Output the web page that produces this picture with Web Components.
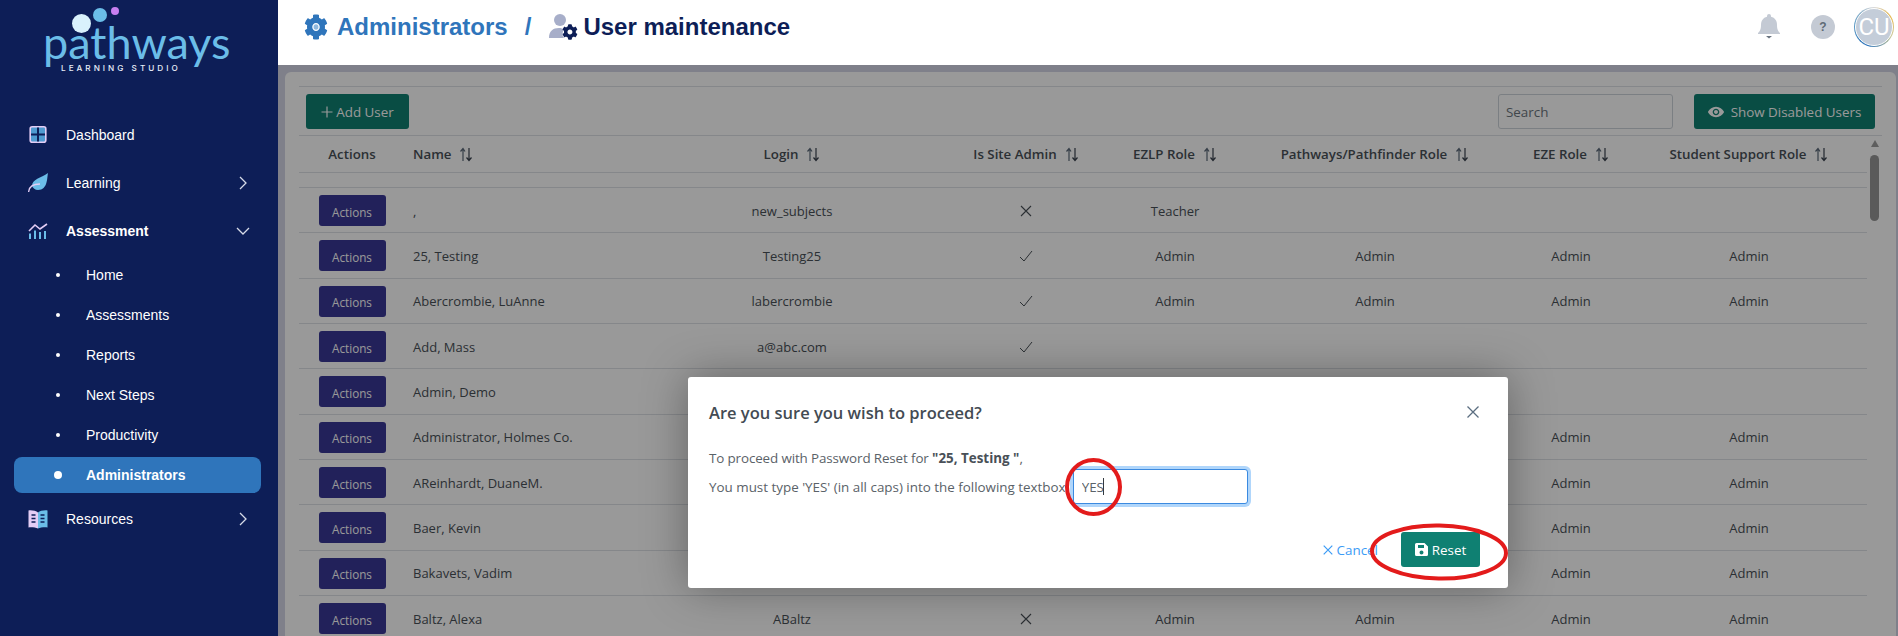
<!DOCTYPE html>
<html>
<head>
<meta charset="utf-8">
<title>User maintenance</title>
<style>
  html, body { margin: 0; height: 100%; overflow: hidden; }
  body { font-family: "Open Sans", "Liberation Sans", sans-serif; }
  app-shell { height: 636px; }
</style>
</head>
<body>
<app-shell>
  <side-nav slot="nav"></side-nav>
  <top-bar slot="top"></top-bar>
  <user-table slot="main">
    <user-row name="," login="new_subjects" site="no" ezlp="Teacher"></user-row>
    <user-row name="25, Testing" login="Testing25" site="yes" ezlp="Admin" path="Admin" eze="Admin" support="Admin"></user-row>
    <user-row name="Abercrombie, LuAnne" login="labercrombie" site="yes" ezlp="Admin" path="Admin" eze="Admin" support="Admin"></user-row>
    <user-row name="Add, Mass" login="a@abc.com" site="yes"></user-row>
    <user-row name="Admin, Demo"></user-row>
    <user-row name="Administrator, Holmes Co." eze="Admin" support="Admin"></user-row>
    <user-row name="AReinhardt, DuaneM." eze="Admin" support="Admin"></user-row>
    <user-row name="Baer, Kevin" eze="Admin" support="Admin"></user-row>
    <user-row name="Bakavets, Vadim" eze="Admin" support="Admin"></user-row>
    <user-row name="Baltz, Alexa" login="ABaltz" site="no" ezlp="Admin" path="Admin" eze="Admin" support="Admin"></user-row>
  </user-table>
  <confirm-dialog slot="dialog"></confirm-dialog>
</app-shell>

<script>
const GEAR = 'M487.4 315.7l-42.6-24.6c4.3-23.2 4.3-47 0-70.2l42.6-24.6c4.9-2.8 7.1-8.6 5.5-14-11.1-35.6-30-67.8-54.7-94.6-3.8-4.1-10-5.1-14.8-2.3L380.8 110c-17.9-15.4-38.5-27.3-60.8-35.1V25.8c0-5.6-3.9-10.5-9.4-11.7-36.7-8.2-74.3-7.8-109.2 0-5.5 1.2-9.4 6.1-9.4 11.7V75c-22.2 7.9-42.8 19.8-60.8 35.1L88.7 85.5c-4.9-2.8-11-1.9-14.8 2.3-24.7 26.7-43.6 58.9-54.7 94.6-1.7 5.4.6 11.2 5.5 14L67.3 221c-4.3 23.2-4.3 47 0 70.2l-42.6 24.6c-4.9 2.8-7.1 8.6-5.5 14 11.1 35.6 30 67.8 54.7 94.6 3.8 4.1 10 5.1 14.8 2.3l42.6-24.6c17.9 15.4 38.5 27.3 60.8 35.1v49.2c0 5.6 3.9 10.5 9.4 11.7 36.7 8.2 74.3 7.8 109.2 0 5.5-1.2 9.4-6.1 9.4-11.7v-49.2c22.2-7.9 42.8-19.8 60.8-35.1l42.6 24.6c4.9 2.8 11 1.9 14.8-2.3 24.7-26.7 43.6-58.9 54.7-94.6 1.5-5.5-.7-11.3-5.6-14.1zM256 336c-44.1 0-80-35.9-80-80s35.9-80 80-80 80 35.9 80 80-35.9 80-80 80z';

class AppShell extends HTMLElement {
  constructor() {
    super();
    this.attachShadow({ mode: 'open' });
    this.shadowRoot.innerHTML = `
      <style>
        :host { display: grid; grid-template-columns: 278px 1fr; grid-template-rows: 65px 1fr; background: #0d1e57; overflow: hidden; }
        .nav { grid-row: 1 / 3; min-height: 0; }
        .main { position: relative; background: #d4d6e6; padding: 7px 2px 0 7px; overflow: hidden; min-height: 0; }
        /* the dimmed page under the modal */
        .backdrop { position: absolute; inset: 0; background: rgba(0,0,0,.4); display: flex; align-items: flex-start; justify-content: flex-start; padding: 312px 0 0 410px; }
      </style>
      <div class="nav"><slot name="nav"></slot></div>
      <div><slot name="top"></slot></div>
      <div class="main">
        <slot name="main"></slot>
        <div class="backdrop"><slot name="dialog"></slot></div>
      </div>`;
  }
}

class SideNav extends HTMLElement {
  constructor() {
    super();
    this.attachShadow({ mode: 'open' });
    const chevR = '<svg class="chev" width="10" height="14" viewBox="0 0 10 14"><path d="M2 1l6 6-6 6" fill="none" stroke="#d6dbe8" stroke-width="1.3"/></svg>';
    const chevD = '<svg class="chev down" width="14" height="10" viewBox="0 0 14 10"><path d="M1 2l6 6 6-6" fill="none" stroke="#d6dbe8" stroke-width="1.3"/></svg>';
    this.shadowRoot.innerHTML = `
      <style>
        :host { display: block; height: 100%; background: #0d1e57; color: #fff; font: 14px "Liberation Sans", Arial, sans-serif; }
        .logo { height: 111px; box-sizing: border-box; display: flex; flex-direction: column; align-items: flex-start; position: relative; padding: 20px 0 0 43px; }
        .bubbles { position: absolute; left: 0; top: 0; }
        .word { font: 400 45px/45px Lato, sans-serif; color: #6bbde8; height: 44px; }
        .sub { font: 500 8.2px/8.2px Inter, sans-serif; letter-spacing: 3px; color: #e8eef8; margin-left: 18px; }
        .item { height: 48px; display: flex; align-items: center; padding: 0 66px 0 28px; position: relative; }
        .item svg.ic { width: 20px; height: 20px; margin-right: 18px; flex: none; }
        .item .t { flex: 1; }
        .item b { font-weight: 700; }
        .chev { position: absolute; right: 30px; }
        .chev.down { right: 28px; }
        .subs { display: flex; flex-direction: column; }
        .s { height: 36px; margin: 2px 17px 2px 14px; border-radius: 8px; display: flex; align-items: center; padding-left: 42px; }
        .s i { width: 4px; height: 4px; border-radius: 50%; background: #fff; margin-right: 26px; }
        .s.on { background: #2f75bb; font-weight: 700; padding-left: 40px; }
        .s.on i { width: 8px; height: 8px; margin-right: 24px; }
      </style>
      <div class="logo">
        <svg class="bubbles" width="140" height="40"><circle cx="81.500" cy="23.500" r="9.500" fill="#d9f1fc"/><circle cx="100" cy="15" r="7" fill="#6bbde8"/><circle cx="115" cy="11" r="4" fill="#c77ff0"/></svg>
        <div class="word">pathways</div>
        <div class="sub">LEARNING STUDIO</div>
      </div>
      <div class="item">
        <svg class="ic" viewBox="0 0 20 20"><rect x="2.200" y="1.700" width="15.600" height="15.600" rx="2" fill="#4f9bd0" stroke="#e3cdf5" stroke-width="1.600"/><path d="M10 2.500v14M3 9.500h14" stroke="#0d1e57" stroke-width="2"/></svg>
        <span class="t">Dashboard</span></div>
      <div class="item">
        <svg class="ic" viewBox="0 0 20 20"><path d="M20 0C19 4 20 17 10 17 7 17 5 15 4 13 4 6 13 5 20 0z" fill="#6bbde8"/><path d="M.6 19C1 14 5 11 12 11" fill="none" stroke="#e3cdf5" stroke-width="1.300"/></svg>
        <span class="t">Learning</span>${chevR}</div>
      <div class="item">
        <svg class="ic" viewBox="0 0 20 20"><path d="M1 10l6-6 5 4 7-5" fill="none" stroke="#e3cdf5" stroke-width="1.600"/><path d="M2 12.500V18M7 9.500V18M12 11V18M17 10V18" stroke="#6bbde8" stroke-width="2"/></svg>
        <span class="t"><b>Assessment</b></span>${chevD}</div>
      <div class="subs">
        <div class="s"><i></i>Home</div>
        <div class="s"><i></i>Assessments</div>
        <div class="s"><i></i>Reports</div>
        <div class="s"><i></i>Next Steps</div>
        <div class="s"><i></i>Productivity</div>
        <div class="s on"><i></i>Administrators</div>
      </div>
      <div class="item">
        <svg class="ic" viewBox="0 0 20 20"><path d="M10 3.500C8 2 4 1 .5 1.500v17c3-.5 7 0 9.500 1z" fill="#e3cdf5"/><path d="M10 3.500c2-1.500 6-2.500 9.500-2v17c-3-.5-7 0-9.500 1z" fill="#6bbde8"/><path d="M3.500 6h4M3.500 9.500h4M3.500 13h4M12.500 6h4M12.500 9.500h4M12.500 13h4" stroke="#0d1e57" stroke-width="1.500"/></svg>
        <span class="t">Resources</span>${chevR}</div>`;
  }
}

class TopBar extends HTMLElement {
  constructor() {
    super();
    this.attachShadow({ mode: 'open' });
    this.shadowRoot.innerHTML = `
      <style>
        :host { display: flex; align-items: center; height: 65px; box-sizing: border-box; background: #fff; padding: 0 4px 11px 26px; font: 700 24px "Liberation Sans", Arial, sans-serif; }
        .crumb { color: #2f75bb; margin-left: 9px; }
        .sep { color: #2f75bb; margin: 0 18px 0 17px; }
        .now { color: #0d1e57; margin-left: 5px; }
        .who { width: 29px; height: 28px; }
        .right { margin-left: auto; display: flex; align-items: center; }
        .help { width: 24px; height: 24px; border-radius: 50%; background: #c4cad4; color: #5f6a76; font-size: 12px; display: flex; align-items: center; justify-content: center; margin: 0 19px 0 31px; }
        .av { width: 40px; height: 40px; box-sizing: border-box; padding: 1px; border-radius: 50%; background: conic-gradient(#d8d8d8 0deg, #e6b94f 60deg, #c9c9a0 120deg, #2f75bb 200deg, #5c9ac4 280deg, #d8d8d8 360deg); }
        .av span { display: flex; width: 100%; height: 100%; box-sizing: border-box; border: 1px solid #fff; border-radius: 50%; background: #c4cdd9; color: #fff; font: 400 24px Roboto, sans-serif; align-items: center; justify-content: center; }
      </style>
      <svg width="24" height="26" viewBox="0 0 512 512" preserveAspectRatio="none"><path fill="#2f75bb" d="${GEAR}"/><circle cx="256" cy="256" r="52" fill="#8fb8de"/></svg>
      <span class="crumb">Administrators</span>
      <span class="sep">/</span>
      <svg class="who" viewBox="0 0 29 28"><circle cx="11" cy="7" r="6" fill="#a7aec9"/><path d="M0 25c0-7 4-10 10-10 2 0 4 .5 5 1.500-2 3-2 6 0 8.500z" fill="#a7aec9"/><g transform="translate(13 11) scale(.031)"><path fill="#0d1e57" d="${GEAR}"/></g></svg>
      <span class="now">User maintenance</span>
      <div class="right">
        <svg width="22" height="26" viewBox="0 0 22 26"><path d="M11 0a2 2 0 0 1 2 2v.8c4 .9 6 4.200 6 8.200 0 5 1.500 6.500 3 8v1H0v-1c1.500-1.500 3-3 3-8 0-4 2-7.300 6-8.200V2a2 2 0 0 1 2-2z" fill="#c4cad4"/><path d="M8 22h6l-3 2.500z" fill="#6a7480"/></svg>
        <div class="help">?</div>
        <div class="av"><span>CU</span></div>
      </div>`;
  }
}

class UserTable extends HTMLElement {
  constructor() {
    super();
    this.attachShadow({ mode: 'open' });
    const sort = '<svg width="14" height="15" viewBox="0 0 14 15"><path d="M4 14V2M1.500 4.500L4 1.500l2 3" fill="none" stroke="#5a6878" stroke-width="1.200"/><path d="M10 1v12M7.500 10.500L10 13.500l2.500-3" fill="none" stroke="#39424e" stroke-width="1.200"/></svg>';
    const th = (t, cls = '') => `<div class="th ${cls}"><span>${t}</span>${sort}</div>`;
    this.shadowRoot.innerHTML = `
      <style>
        :host { display: block; height: 100%; box-sizing: border-box; background: #fff; border-radius: 6px 6px 0 0; padding: 14px 14px 0 14px; font: 13px "Open Sans", sans-serif; color: #495057; overflow: hidden; }
        .toolbar { height: 50px; box-sizing: border-box; border: solid #dee2e6; border-width: 1px 0; display: flex; align-items: center; padding: 0 7px; gap: 21px; }
        .add { display: flex; align-items: center; gap: 3px; background: #0f8072; color: #fff; width: 103px; height: 35px; border-radius: 3px; justify-content: center; font-size: 13.400px; padding-top: 1px; box-sizing: border-box; }
        .search { margin-left: auto; width: 175px; height: 35px; box-sizing: border-box; border: 1px solid #ced4da; border-radius: 3px; padding: 1px 7px 0; font: 13.400px "Open Sans", sans-serif; color: #495057; }
        .search::placeholder { color: #6c757d; }
        .show { display: flex; align-items: center; justify-content: center; gap: 7px; background: #0f8072; color: #fff; width: 181px; height: 35px; border-radius: 3px; font-size: 13.400px; padding-top: 1px; box-sizing: border-box; }
        .body { position: relative; padding-right: 15px; }
        .head { display: grid; grid-template-columns: 106px 238px 298px 170px 128px 272px 120px 236px; height: 37px; border-bottom: 1px solid #dee2e6; box-sizing: border-box; }
        .th { display: flex; align-items: center; justify-content: center; gap: 8px; font-weight: 600; font-size: 13.300px; color: #495057; }
        .th.l { justify-content: flex-start; padding-left: 8px; }
        .gap { height: 15px; box-sizing: border-box; border-bottom: 1px solid #dee2e6; background: #fff; }
        .bar { position: absolute; right: 3px; top: 4px; width: 9px; display: flex; flex-direction: column; align-items: center; gap: 8px; }
        .bar i { width: 0; height: 0; border: solid transparent; border-width: 0 4.500px 7px; border-bottom-color: #9d9d9d; }
        .bar b { width: 9px; height: 66px; border-radius: 5px; background: #969696; }
      </style>
      <div class="toolbar">
        <div class="add"><svg width="12" height="12" viewBox="0 0 12 12"><path d="M6 .5v11M.5 6h11" stroke="#fff" stroke-width="1.200"/></svg> Add User</div>
        <input class="search" placeholder="Search">
        <div class="show"><svg width="16" height="12" viewBox="0 0 576 448" preserveAspectRatio="none"><path fill="#fff" d="M288 32C155 32 55 112 5 208c-6 10-6 22 0 32 50 96 150 176 283 176s233-80 283-176c6-10 6-22 0-32C521 112 421 32 288 32zm0 312c-66 0-120-54-120-120s54-120 120-120 120 54 120 120-54 120-120 120zm0-192c-40 0-72 32-72 72s32 72 72 72 72-32 72-72-32-72-72-72z"/></svg>Show Disabled Users</div>
      </div>
      <div class="body">
        <div class="head">
          <div class="th"><span>Actions</span></div>
          ${th('Name', 'l')}${th('Login')}${th('Is Site Admin')}${th('EZLP Role')}${th('Pathways/Pathfinder Role')}${th('EZE Role')}${th('Student Support Role')}
        </div>
        <div class="gap"></div>
        <slot></slot>
        <div class="bar"><i></i><b></b></div>
      </div>`;
  }
}

class UserRow extends HTMLElement {
  constructor() {
    super();
    this.attachShadow({ mode: 'open' });
    const a = k => this.getAttribute(k) || '';
    const site = a('site');
    const mark = site === 'yes'
      ? '<svg width="14" height="12" viewBox="0 0 14 12"><path d="M1 7l4 4 8-10" fill="none" stroke="#495057" stroke-width="1"/></svg>'
      : site === 'no'
        ? '<svg width="12" height="12" viewBox="0 0 12 12"><path d="M1 1l10 10M11 1L1 11" fill="none" stroke="#495057" stroke-width="1.100"/></svg>'
        : '';
    this.shadowRoot.innerHTML = `
      <style>
        :host { display: grid; grid-template-columns: 106px 238px 298px 170px 128px 272px 120px 236px; height: 45.330px; box-sizing: border-box; border-bottom: 1px solid #dee2e6; align-items: center; text-align: center; padding-top: 1px; }
        .act { justify-self: center; width: 67px; height: 31px; border: 0; border-radius: 3px; padding: 2px 0 0; background: #3a3896; color: #fff; font: 11.700px "Open Sans", sans-serif; }
        .name { text-align: left; padding-left: 8px; }
      </style>
      <button class="act">Actions</button>
      <div class="name">${a('name')}</div>
      <div>${a('login')}</div>
      <div style="display:flex;justify-content:center">${mark}</div>
      <div>${a('ezlp')}</div>
      <div>${a('path')}</div>
      <div>${a('eze')}</div>
      <div>${a('support')}</div>`;
  }
}

class ConfirmDialog extends HTMLElement {
  constructor() {
    super();
    this.attachShadow({ mode: 'open' });
    this.shadowRoot.innerHTML = `
      <style>
        :host { display: block; position: relative; width: 820px; height: 211px; box-sizing: border-box; background: #fff; border-radius: 3px; box-shadow: 0 0 45px rgba(0,0,0,.35); color: #495057; font: 13.400px "Open Sans", sans-serif; padding: 21px; }
        .hd { display: flex; justify-content: space-between; align-items: center; height: 28px; }
        h2 { margin: 0; font: 600 16.500px "Open Sans", sans-serif; color: #434b53; }
        p { margin: 0; display: flex; align-items: center; white-space: pre; color: #5a6268; }
        p b { color: #495057; letter-spacing: 0; }
        .bd { margin-top: 18px; }
        .l1 { height: 28px; margin-bottom: -3px; letter-spacing: -.12px; }
        .field { position: relative; margin-left: 7px; display: flex; }
        .caret { position: absolute; left: 30px; top: 9px; width: 1px; height: 17px; background: #343a40; }
        input { width: 175px; height: 35px; box-sizing: border-box; border: 1px solid #3b8ae0; border-radius: 3px; box-shadow: 0 0 0 3px #b0d6fb; padding: 0 8px; font: 13.400px "Open Sans", sans-serif; color: #5a6268; outline: 0; }
        .ft { display: flex; justify-content: flex-end; align-items: center; margin-top: 28px; gap: 23px; padding-right: 7px; }
        .cancel { color: #3b9bf5; display: flex; align-items: center; gap: 4px; }
        .reset { width: 79px; height: 35px; border-radius: 3px; background: #0f8072; color: #fff; display: flex; align-items: center; justify-content: center; gap: 4px; }
        /* hand drawn red marks on top of the dialog */
        .mark { position: absolute; pointer-events: none; overflow: visible; }
      </style>
      <div class="hd"><h2>Are you sure you wish to proceed?</h2>
        <svg width="14" height="14" viewBox="0 0 14 14" style="margin-right:7px"><path d="M1.500 1.500l11 11M12.500 1.500l-11 11" stroke="#5b6e80" stroke-width="1.300"/></svg></div>
      <div class="bd">
        <p class="l1">To proceed with Password Reset for <b>"25, Testing "</b>,</p>
        <p>You must type 'YES' (in all caps) into the following textbox<span class="field"><input value="YES"><i class="caret"></i></span></p>
      </div>
      <div class="ft">
        <div class="cancel"><svg width="10" height="10" viewBox="0 0 10 10"><path d="M.7.7l8.600 8.600M9.300.7L.7 9.300" stroke="#3b9bf5" stroke-width="1.200"/></svg>Cancel</div>
        <div class="reset"><svg width="13" height="13" viewBox="0 0 13 13"><path fill="#fff" fill-rule="evenodd" d="M1.500 0h8L13 3.500v8a1.500 1.500 0 0 1-1.500 1.500h-10A1.500 1.500 0 0 1 0 11.500v-10A1.500 1.500 0 0 1 1.500 0zM3 2v3h6V2zm3.500 5.500a2 2 0 1 0 0 4 2 2 0 0 0 0-4z"/></svg>Reset</div>
      </div>
      <svg class="mark" style="left:376px;top:80px" width="60" height="60"><ellipse cx="29.500" cy="30" rx="26.500" ry="27" fill="none" stroke="#e31b1b" stroke-width="4"/></svg>
      <svg class="mark" style="left:682px;top:146px" width="140" height="58"><ellipse cx="69" cy="29" rx="67" ry="26.500" fill="none" stroke="#e31b1b" stroke-width="4" transform="rotate(1 69 29)"/></svg>`;
  }
}

customElements.define('app-shell', AppShell);
customElements.define('side-nav', SideNav);
customElements.define('top-bar', TopBar);
customElements.define('user-table', UserTable);
customElements.define('user-row', UserRow);
customElements.define('confirm-dialog', ConfirmDialog);
</script>
</body>
</html>
